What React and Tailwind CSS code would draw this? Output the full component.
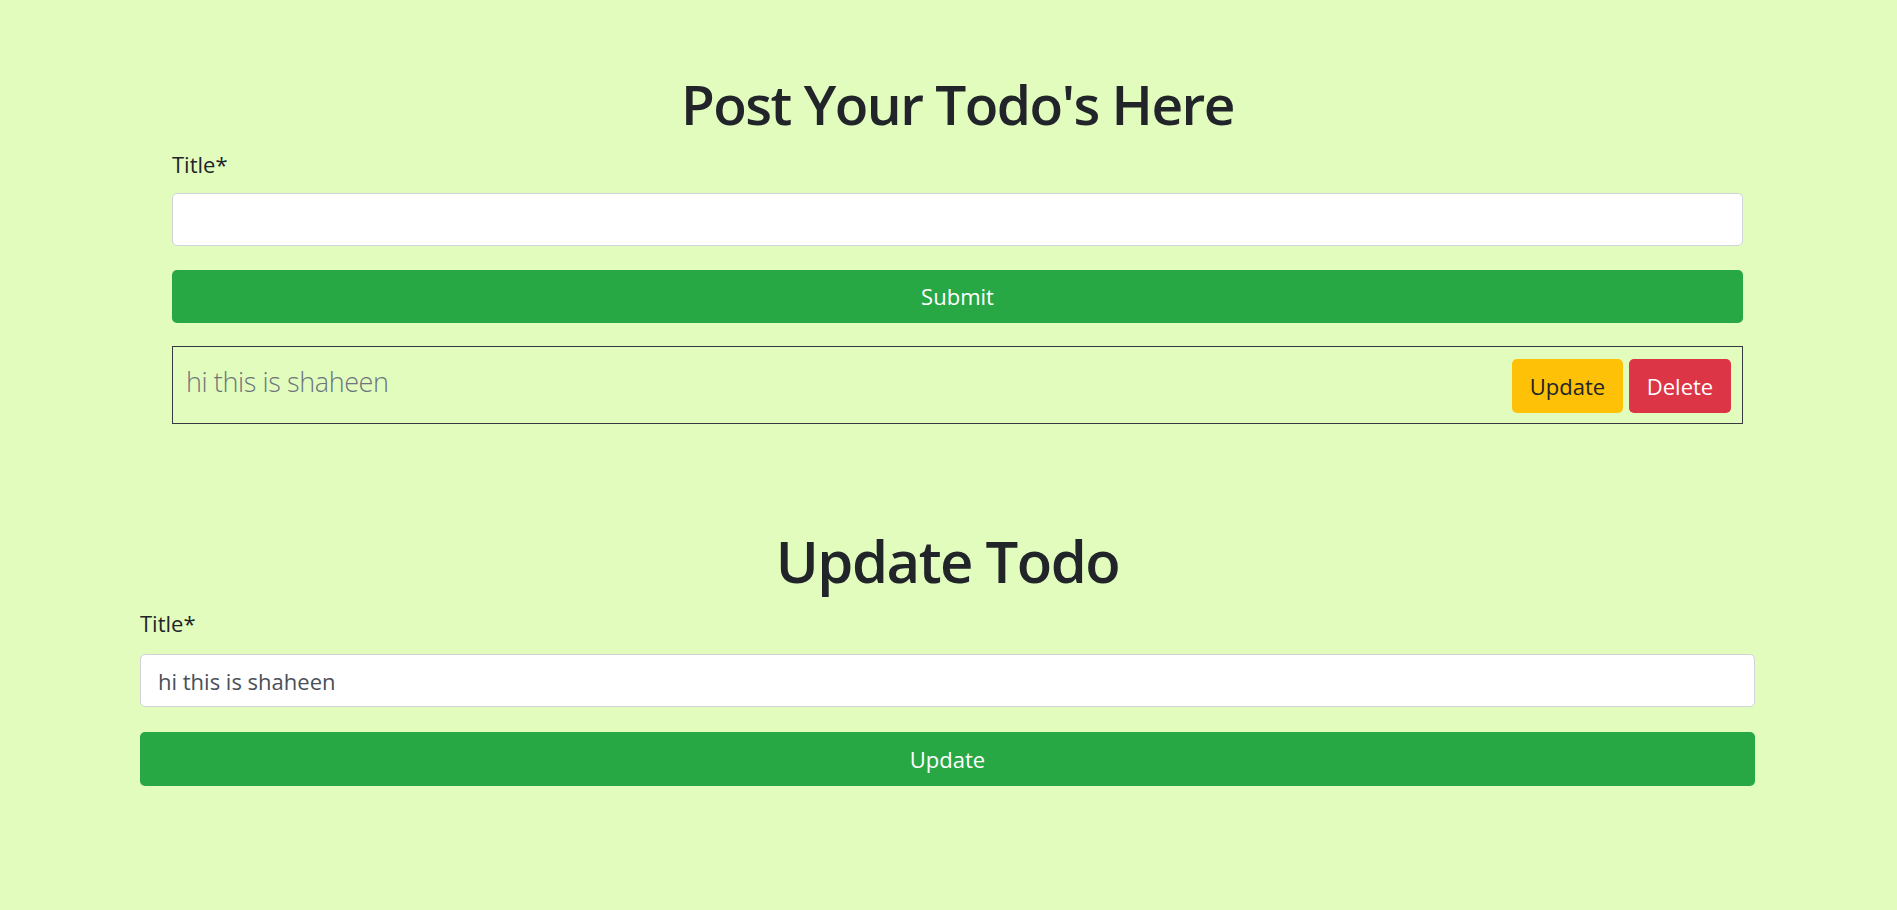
import React from "react";

export default function App() {
  const font = { fontFamily: '"Open Sans", "Noto Sans", sans-serif' };
  return (
    <div className="min-h-[910px] w-full bg-[#e2fcbe] text-[#212529]" style={font}>
      <div className="flex flex-col pt-[76px]">
        {/* Post section */}
        <div className="ml-[172px] w-[1571px] flex flex-col">
          <h1 className="text-center text-[55px] leading-none font-semibold tracking-[-1.5px]">
            Post Your Todo's Here
          </h1>
          <label className="mt-[17px] block text-[22px] leading-[33px]">Title*</label>
          <input
            type="text"
            className="mt-[12px] h-[53px] w-full rounded-[5px] border border-[#ced4da] bg-white px-[17px] text-[22px] text-[#495057] outline-none"
          />
          <button className="mt-[24px] h-[53px] w-full rounded-[5px] bg-[#28a745] text-[22px] leading-[33px] text-white">
            Submit
          </button>
          <div className="mt-[23px] flex h-[78px] items-start justify-between border border-[#343a40] pl-[13px] pr-[11px]">
            <span className="pt-[12px] text-[27px] leading-[45px] font-light tracking-[-0.4px] text-[#6c757d]">
              hi this is shaheen
            </span>
            <div className="flex gap-[6px] pt-[12px]">
              <button className="h-[54px] w-[111px] rounded-[5px] bg-[#ffc107] text-[22px] leading-[33px] text-[#212529]">
                Update
              </button>
              <button className="h-[54px] w-[102px] rounded-[5px] bg-[#dc3545] text-[22px] leading-[33px] text-white">
                Delete
              </button>
            </div>
          </div>
        </div>

        {/* Update section */}
        <div className="ml-[140px] mt-[108px] w-[1615px] flex flex-col">
          <h2 className="text-center text-[58px] leading-none font-semibold tracking-[-1.5px]">
            Update Todo
          </h2>
          <label className="mt-[17px] block text-[22px] leading-[33px]">Title*</label>
          <input
            type="text"
            defaultValue="hi this is shaheen"
            className="mt-[14px] h-[53px] w-full rounded-[5px] border border-[#ced4da] bg-white px-[17px] text-[22px] text-[#495057] outline-none"
          />
          <button className="mt-[25px] h-[54px] w-full rounded-[5px] bg-[#28a745] text-[22px] leading-[33px] text-white">
            Update
          </button>
        </div>
      </div>
    </div>
  );
}
